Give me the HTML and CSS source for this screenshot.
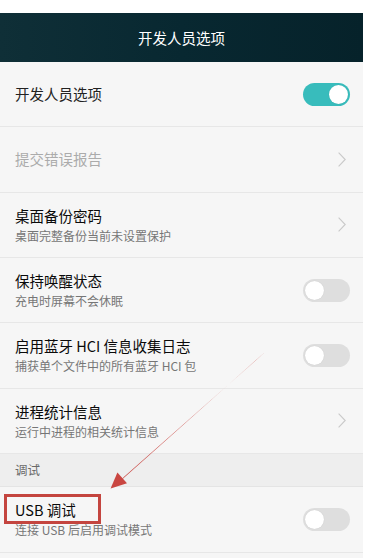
FILE: index.html
```html
<!DOCTYPE html>
<html lang="zh-CN">
<head>
<meta charset="utf-8">
<title>开发人员选项</title>
<link rel="stylesheet" href="styles.css">
</head>
<body>
<div class="screen">
  <header class="topbar">开发人员选项</header>
  <div class="list">
    <div class="row">
      <div class="text"><div class="title plain">开发人员选项</div></div>
      <div class="control"><span class="switch on"><span class="knob"></span></span></div>
    </div>
    <div class="row">
      <div class="text"><div class="title disabled">提交错误报告</div></div>
      <div class="control"><svg class="chev" viewBox="0 0 8 15" width="8" height="15"><polyline points="0.6,0.6 7.2,7.5 0.6,14.4" /></svg></div>
    </div>
    <div class="row">
      <div class="text"><div class="title">桌面备份密码</div><div class="sub">桌面完整备份当前未设置保护</div></div>
      <div class="control"><svg class="chev" viewBox="0 0 8 15" width="8" height="15"><polyline points="0.6,0.6 7.2,7.5 0.6,14.4" /></svg></div>
    </div>
    <div class="row">
      <div class="text"><div class="title">保持唤醒状态</div><div class="sub">充电时屏幕不会休眠</div></div>
      <div class="control"><span class="switch"><span class="knob"></span></span></div>
    </div>
    <div class="row">
      <div class="text"><div class="title">启用蓝牙 HCI 信息收集日志</div><div class="sub">捕获单个文件中的所有蓝牙 HCI 包</div></div>
      <div class="control"><span class="switch"><span class="knob"></span></span></div>
    </div>
    <div class="row">
      <div class="text"><div class="title">进程统计信息</div><div class="sub">运行中进程的相关统计信息</div></div>
      <div class="control"><svg class="chev" viewBox="0 0 8 15" width="8" height="15"><polyline points="0.6,0.6 7.2,7.5 0.6,14.4" /></svg></div>
    </div>
    <div class="section">调试</div>
    <div class="row last">
      <div class="text"><div class="title">USB 调试</div><div class="sub">连接 USB 后启用调试模式</div></div>
      <div class="control"><span class="switch"><span class="knob"></span></span></div>
    </div>
  </div>
</div>
<div class="highlight"></div>
<svg class="arrow" viewBox="0 0 369 558" width="369" height="558">
  <polygon points="264.6,352.6 263.4,353.4 119.8,481.6 123.8,477.0" />
  <polygon points="110.6,488.4 127.0,483.2 117.4,472.4" />
</svg>
</body>
</html>
```
FILE: styles.css
```css
html, body {
  margin: 0;
  padding: 0;
  background: #ffffff;
}
body {
  position: relative;
  width: 369px;
  height: 558px;
  overflow: hidden;
  font-family: "Noto Sans CJK SC", "Noto Sans", sans-serif;
}
.screen {
  width: 363px;
  margin-top: 13px;
  background: #f6f6f6;
  height: 545px;
}
.topbar {
  height: 49px;
  background: linear-gradient(90deg, #0f2f37 0%, #082831 50%, #06222a 100%);
  color: #ffffff;
  font-size: 14.5px;
  display: flex;
  align-items: center;
  justify-content: center;
}
.list {
  display: flex;
  flex-direction: column;
}
.row {
  box-sizing: border-box;
  height: 65.33px;
  border-bottom: 1px solid #e7e7e7;
  display: flex;
  align-items: center;
  padding: 0 13px 0 15px;
}
.row.last {
  height: 66px;
}
.text {
  flex: 1;
  display: flex;
  flex-direction: column;
}
.title {
  font-size: 14.5px;
  line-height: 20px;
  color: #0a0a0a;
  font-weight: 400;
}
.title.plain {
  color: #222;
}
.title.disabled {
  color: #ababab;
}
.sub {
  margin-top: 2px;
  font-size: 12px;
  line-height: 16px;
  color: #767676;
}
.control {
  width: 48px;
  display: flex;
  justify-content: flex-end;
  align-items: center;
}
.chev {
  margin-right: 4px;
  fill: none;
  stroke: #c9c9c9;
  stroke-width: 1.1;
}
.switch {
  box-sizing: border-box;
  width: 47px;
  height: 23px;
  border-radius: 12px;
  background: #dedede;
  display: flex;
  align-items: center;
  padding: 0 2px;
}
.switch .knob {
  width: 19px;
  height: 19px;
  border-radius: 50%;
  background: #ffffff;
  box-shadow: 0 0 1px rgba(0,0,0,0.15);
}
.switch.on {
  background: #38bcbc;
  justify-content: flex-end;
}
.section {
  box-sizing: border-box;
  height: 33px;
  background: #eeeeee;
  border-bottom: 1px solid #e4e4e4;
  font-size: 12.5px;
  color: #6a6a6a;
  display: flex;
  align-items: center;
  padding-left: 15px;
}
.highlight {
  position: absolute;
  left: 4px;
  top: 494px;
  width: 97px;
  height: 30px;
  box-sizing: border-box;
  border: 3px solid #c4453f;
}
.arrow {
  position: absolute;
  left: 0;
  top: 0;
  fill: #c94641;
  pointer-events: none;
}
```
